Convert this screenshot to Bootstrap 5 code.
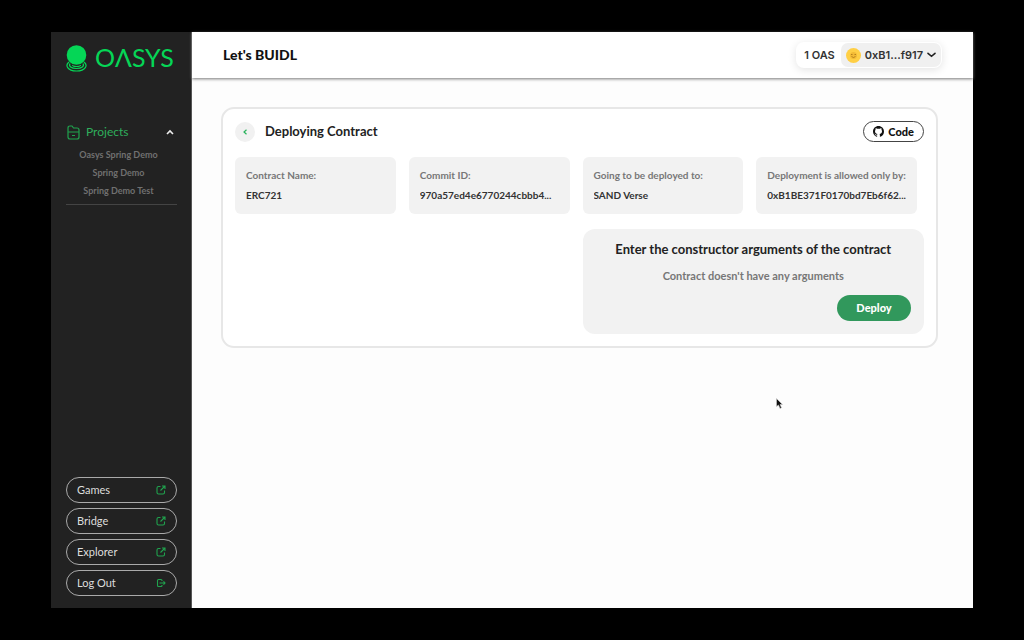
<!DOCTYPE html>
<html lang="en">
<head>
<meta charset="utf-8">
<meta name="viewport" content="width=device-width, initial-scale=1">
<title>Oasys - Deploying Contract</title>
<link rel="stylesheet" href="https://cdn.jsdelivr.net/npm/bootstrap@5.3.0/dist/css/bootstrap.min.css">
<style>
  body { background: #000; font-family: Lato, "Liberation Sans", sans-serif; font-size: 11px; line-height: 16px; color: #222; padding: 32px 51px; }
  .app-shell { min-height: calc(100vh - 64px); background: #fdfdfd; }
  .side { width: 141px; background: #222; padding: 12px 14px 12px 15px; border-right: 1px solid #555; }
  .brand { color: #05d656; font-size: 25px; line-height: 26px; height: 28px; gap: 8px; }
  .brand:hover { color: #05d656; }
  .brand span { padding-bottom: 2px; }
  .projects { margin-top: 50px; border-bottom: 1px solid #444; padding-bottom: 4px; }
  .projects-toggle { color: #2fae5c; font-size: 12px; line-height: 20px; gap: 6px; margin-bottom: 4px; padding: 0 3px 0 1px; border: 0; background: none; }
  .sub-link { color: #707070; font-size: 9px; line-height: 18px; font-weight: 700; padding-right: 6px; }
  .side-links { gap: 5px; }
  .side-btn { border: 1px solid #aaa; border-radius: 13px; color: #ddd; height: 26px; padding: 0 10px; font-size: 11px; background: none; }
  .topbar { height: 46px; background: #fff; box-shadow: 0 1px 3px #777; padding: 0 31px; }
  .page-name { font-size: 14px; line-height: 20px; font-weight: 900; color: #111; }
  .wallet { font-family: Inter, sans-serif; font-weight: 600; font-size: 11px; color: #333; height: 26px; border-radius: 8px; padding: 1px 1px 1px 8px; gap: 6px; box-shadow: 0 2px 8px #0000001c; background: #fff; }
  .account { background: #f0f0f0; border: 0; border-radius: 7px; height: 24px; padding: 0 5px; gap: 4px; color: inherit; font-weight: 600; }
  .content { padding: 29px 35px 29px 29px; }
  .panel { border: 2px solid #e7e7e7; border-radius: 13px; background: #fff; padding: 12px; }
  .back { width: 20px; height: 20px; background: #f1f1f1; border: 0; }
  .panel-title { font-size: 13px; line-height: 18px; font-weight: 700; padding-bottom: 1px; margin: 0 0 0 10px; }
  .code-btn { height: 21px; border: 1px solid #444; border-radius: 11px; background: #fff; font-size: 11px; font-weight: 900; color: #111; padding: 0 9px; gap: 4px; }
  .facts { display: grid; grid-template-columns: repeat(4, minmax(0, 1fr)); gap: 13px; margin: 15px 7px 15px 0; }
  .fact { background: #f2f2f2; border-radius: 6px; padding: 10px 4px 10px 11px; height: 57px; }
  .fact dt { font-size: 10px; font-weight: 700; color: #777; margin-bottom: 4px; white-space: nowrap; }
  .fact dd { font-size: 10px; font-weight: 700; color: #333; margin: 0; }
  .args { width: calc(50% - 3px); background: #f2f2f2; border-radius: 12px; padding: 11px 13px 13px; }
  .args h2 { font-size: 13px; line-height: 18px; font-weight: 700; margin: 0 0 10px; }
  .args p { font-size: 11px; font-weight: 700; color: #777; margin: 0 0 11px; }
  .deploy { width: 74px; height: 26px; border: 0; border-radius: 13px; background: #31985c; color: #fff; font-size: 11px; font-weight: 900; }
  .pointer { position: absolute; left: 776px; top: 398px; }
  @media (max-width: 760px) {
    .facts { grid-template-columns: repeat(2, minmax(0, 1fr)); }
    .args { width: 100%; }
  }
</style>
</head>
<body>
<svg width="0" height="0" class="position-absolute" aria-hidden="true">
  <symbol id="external" viewBox="0 0 10 10"><path d="M4.500 1.500H2.500Q1 1.500 1 3V7.500Q1 9 2.500 9H7Q8.500 9 8.500 7.500V5.500M6 1H9V4M9 1L4.500 5.500" fill="none" stroke="#20a34e" stroke-width="1.100"/></symbol>
</svg>
<div class="app-shell d-flex">
  <aside class="side d-flex flex-column flex-shrink-0">
    <a href="#" class="brand d-flex align-items-center text-decoration-none">
      <svg width="21" height="27" viewBox="0 0 21 27" aria-hidden="true" class="flex-shrink-0">
        <g fill="none" stroke="#05d656" stroke-width="1.200">
          <path d="M3 17C-1 20 1 26 10.500 26S22 20 18 17"/>
          <path d="M4 18.500C2.500 21 5 23.500 10.500 23.500S18.500 21 17 18.500"/>
          <path d="M6.500 20C6 22 14.500 22 14.500 20"/>
        </g>
        <circle cx="10.500" cy="10" r="9.800" fill="#05d656"/>
      </svg>
      <span>OΛSYS</span>
    </a>
    <nav class="projects d-flex flex-column">
      <button type="button" class="projects-toggle d-flex align-items-center">
        <svg width="13" height="15" viewBox="0 0 13 15" fill="none" stroke="#20a34e" stroke-width="1.200" aria-hidden="true"><path d="M1 7V3Q1 1 3 1H5L6.500 3H10Q12 3 12 5V7M1 7H12V12Q12 14 10 14H3Q1 14 1 12V7M5 10.500H8"/></svg>
        <span>Projects</span>
        <svg class="ms-auto" width="8" height="6" viewBox="0 0 8 6" fill="none" stroke="#eee" stroke-width="1.600" aria-hidden="true"><path d="M1 5L4 2L7 5"/></svg>
      </button>
      <a href="#" class="sub-link text-center text-decoration-none">Oasys Spring Demo</a>
      <a href="#" class="sub-link text-center text-decoration-none">Spring Demo</a>
      <a href="#" class="sub-link text-center text-decoration-none">Spring Demo Test</a>
    </nav>
    <div class="side-links d-flex flex-column mt-auto">
      <a href="#" class="side-btn d-flex align-items-center justify-content-between text-decoration-none">Games<svg width="10" height="10"><use href="#external"/></svg></a>
      <a href="#" class="side-btn d-flex align-items-center justify-content-between text-decoration-none">Bridge<svg width="10" height="10"><use href="#external"/></svg></a>
      <a href="#" class="side-btn d-flex align-items-center justify-content-between text-decoration-none">Explorer<svg width="10" height="10"><use href="#external"/></svg></a>
      <button type="button" class="side-btn d-flex align-items-center justify-content-between">Log Out<svg width="10" height="10" viewBox="0 0 10 10" fill="none" stroke="#20a34e" stroke-width="1.100" aria-hidden="true"><path d="M6 3V2.500Q6 1.500 5 1.500H2.500Q1.500 1.500 1.500 2.500V7.500Q1.500 8.500 2.500 8.500H5Q6 8.500 6 7.500V7M3.500 5H9M7.500 3.300L9 5L7.500 6.700"/></svg></button>
    </div>
  </aside>
  <div class="flex-grow-1">
    <header class="topbar d-flex align-items-center justify-content-between">
      <h1 class="page-name m-0">Let's BUIDL</h1>
      <div class="wallet d-flex align-items-center">
        <span>1 OAS</span>
        <button type="button" class="account d-flex align-items-center">
          <svg width="15" height="15" viewBox="0 0 15 15" aria-hidden="true"><circle cx="7.500" cy="7.500" r="7.500" fill="#ffcf45"/><circle cx="7.500" cy="7.500" r="3.500" fill="#f3bb36"/><path d="M5 6.500H6.500M8.500 6.500H10M5.500 8.500Q7.500 10.500 9.500 8.500" stroke="#a87518" fill="none" stroke-width=".8"/></svg>
          0xB1...f917
          <svg width="9" height="6" viewBox="0 0 9 6" fill="none" stroke="#222" stroke-width="1.600" stroke-linecap="round" aria-hidden="true"><path d="M1 1.300L4.500 4.300L8 1.300"/></svg>
        </button>
      </div>
    </header>
    <main class="content">
      <section class="panel">
        <div class="d-flex align-items-center">
          <button type="button" class="back rounded-circle p-0 d-flex align-items-center justify-content-center" aria-label="Back"><svg width="4" height="6" viewBox="0 0 4 6" fill="none" stroke="#28b35b" stroke-width="1.200"><path d="M3.500 .7L1 3L3.500 5.300"/></svg></button>
          <h2 class="panel-title">Deploying Contract</h2>
          <button type="button" class="code-btn ms-auto d-flex align-items-center">
            <svg width="11" height="11" viewBox="0 0 16 16" fill="#111" aria-hidden="true"><path d="M8 0C3.580 0 0 3.580 0 8c0 3.540 2.290 6.530 5.470 7.590.4.070.55-.17.55-.38v-1.490c-2.010.37-2.530-.49-2.690-.94-.09-.23-.48-.94-.82-1.130-.28-.15-.68-.52-.01-.53.63-.01 1.080.58 1.230.82.72 1.210 1.870.87 2.330.66.070-.52.28-.87.51-1.070-1.780-.2-3.640-.89-3.640-3.950 0-.87.31-1.590.82-2.150-.08-.2-.36-1.020.08-2.120 0 0 .67-.21 2.200.82a7.600 7.600 0 0 1 4 0c1.530-1.040 2.200-.82 2.200-.82.44 1.100.16 1.920.08 2.120.51.56.82 1.270.82 2.150 0 3.070-1.870 3.750-3.650 3.950.29.25.54.73.54 1.480v2.190c0 .21.15.46.55.38A8 8 0 0 0 16 8c0-4.420-3.580-8-8-8z"/></svg>
            Code
          </button>
        </div>
        <dl class="facts">
          <div class="fact"><dt>Contract Name:</dt><dd class="text-truncate">ERC721</dd></div>
          <div class="fact"><dt>Commit ID:</dt><dd class="text-truncate">970a57ed4e6770244cbbb4...</dd></div>
          <div class="fact"><dt>Going to be deployed to:</dt><dd class="text-truncate">SAND Verse</dd></div>
          <div class="fact"><dt>Deployment is allowed only by:</dt><dd class="text-truncate">0xB1BE371F0170bd7Eb6f62...</dd></div>
        </dl>
        <div class="args ms-auto text-center">
          <h2>Enter the constructor arguments of the contract</h2>
          <p>Contract doesn't have any arguments</p>
          <button type="button" class="deploy d-block ms-auto p-0">Deploy</button>
        </div>
      </section>
    </main>
  </div>
</div>
<svg class="pointer" width="7" height="11" viewBox="0 0 7 11" aria-hidden="true"><path d="M.5 .5V8.500L2.500 7L4 10.500L5.500 9.800L4 6.500H6.500Z" fill="#111" stroke="#ccc" stroke-width=".6"/></svg>
<script src="https://cdn.jsdelivr.net/npm/bootstrap@5.3.0/dist/js/bootstrap.bundle.min.js"></script>
</body>
</html>
